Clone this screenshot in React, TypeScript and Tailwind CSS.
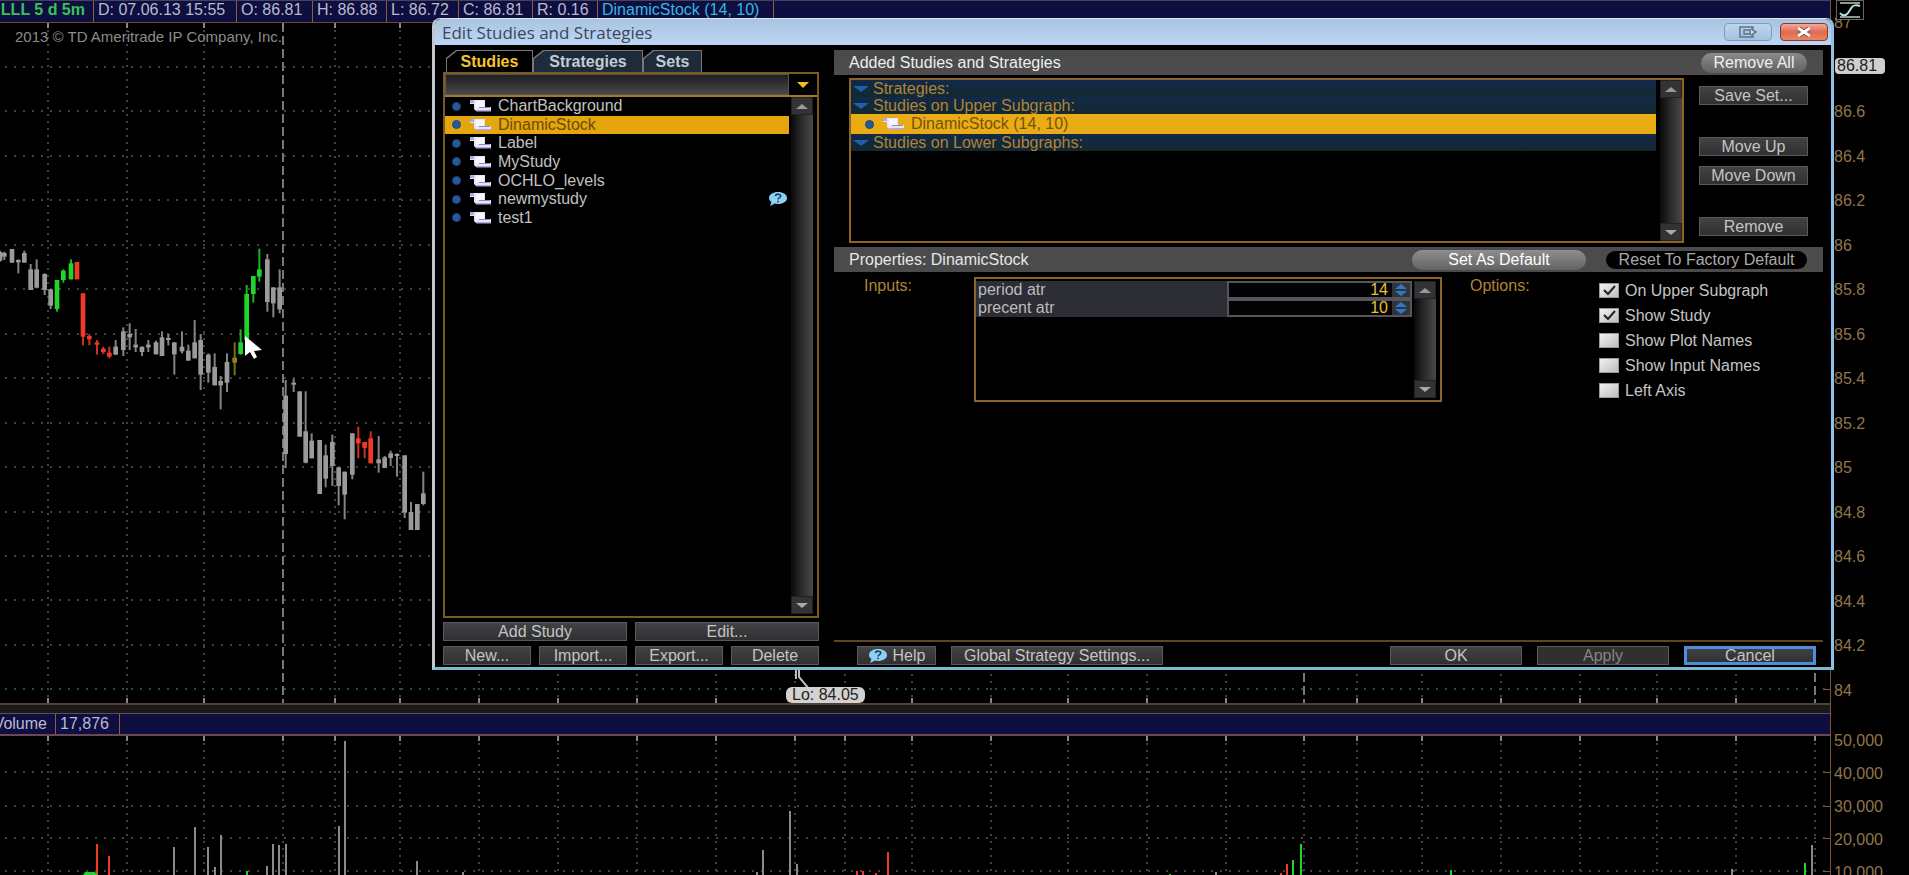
import { useState } from 'react';
import type { ReactNode } from 'react';

type Candle = [x: number, high: number, low: number, top: number, bottom: number, tone?: string];

const GREEN = '#1fd52c';
const RED = '#ee3a26';
const OLIVE = '#8b8420';
const GREY = '#9a9a9a';

// candles are kept at 3 units per pixel
const candles: Candle[] = [
  [0, 62, 95, 66, 92], [13, 65, 90, 69, 80], [36, 57, 98, 57, 98], [55, 88, 130, 90, 97], [73, 62, 98, 69, 98],
  [92, 102, 180, 118, 180], [110, 88, 175, 118, 173], [134, 130, 195, 132, 180], [152, 178, 237, 178, 227],
  [171, 150, 245, 150, 237, GREEN], [190, 118, 158, 122, 150, GREEN], [213, 88, 148, 100, 148, GREEN],
  [231, 96, 148, 96, 148, RED], [249, 190, 346, 190, 320, RED], [268, 312, 346, 318, 328, RED],
  [291, 330, 374, 337, 344, RED], [310, 350, 372, 356, 366, RED], [328, 350, 385, 368, 380, RED],
  [347, 330, 374, 350, 374], [370, 292, 378, 304, 360], [389, 280, 360, 312, 322], [407, 297, 366, 344, 352],
  [426, 350, 378, 350, 366], [445, 330, 366, 344, 352], [468, 332, 373, 337, 373], [486, 304, 378, 322, 378],
  [505, 312, 346, 324, 330], [523, 337, 434, 337, 373], [546, 304, 370, 350, 364], [565, 344, 392, 362, 392],
  [584, 270, 385, 337, 385], [602, 312, 480, 330, 434], [625, 370, 458, 374, 428], [644, 370, 466, 411, 466],
  [662, 438, 538, 453, 466], [681, 370, 486, 396, 458], [704, 337, 436, 383, 398, OLIVE],
  [722, 298, 374, 337, 372, GREEN], [740, 165, 345, 192, 330, GREEN], [760, 138, 218, 138, 192, GREEN],
  [778, 56, 155, 118, 140, GREEN], [802, 72, 245, 88, 216], [820, 172, 262, 172, 220], [839, 118, 250, 172, 238],
  [857, 450, 714, 497, 672], [881, 446, 486, 458, 464], [899, 484, 620, 484, 620], [917, 484, 700, 604, 698],
  [935, 610, 685, 632, 685], [959, 630, 792, 630, 792], [977, 644, 772, 676, 746], [997, 614, 768, 636, 708],
  [1016, 712, 826, 712, 768], [1034, 725, 868, 725, 794], [1057, 610, 748, 610, 734],
  [1075, 590, 685, 625, 640, RED], [1094, 636, 685, 636, 654, RED], [1112, 604, 700, 625, 700, RED],
  [1136, 618, 728, 688, 700], [1154, 678, 714, 682, 714], [1172, 662, 708, 670, 684], [1191, 670, 740, 672, 678],
  [1214, 676, 864, 676, 848], [1233, 816, 900, 846, 900], [1252, 822, 900, 822, 900], [1270, 725, 826, 790, 822],
];

const volumes: [x: number, top: number, tone?: string][] = [
  [97, 108, RED], [109, 120, RED], [174, 111], [195, 91], [208, 111], [215, 131], [221, 99], [247, 135, GREEN],
  [267, 130], [273, 108], [279, 109], [286, 108], [339, 90], [345, 5], [417, 125], [463, 136], [757, 136],
  [763, 114], [790, 75], [797, 128], [857, 135, RED], [863, 135, RED], [876, 137, RED], [888, 116, RED],
  [1170, 138, GREEN], [1216, 136], [1281, 137, RED], [1287, 128, RED], [1293, 124, GREEN], [1301, 108, GREEN],
  [1451, 134, GREEN], [1732, 133], [1805, 127, GREEN], [1812, 109],
];

const sessions = [283, 1304, 1815];
const hours = [48, 127, 204, 335, 400, 479, 558, 637, 716, 795, 845, 912, 991, 1068, 1147, 1226, 1357, 1422, 1501, 1580, 1657, 1736];
const priceLines = [44, 88, 133, 177, 222, 266, 311, 355, 400, 444, 489, 533, 577, 622, 666];
const volumeLines = [36, 70, 102, 135];

const quotes = [
  { text: 'D: 07.06.13 15:55', cell: 'w-[143px]' },
  { text: 'O: 86.81', cell: 'w-[76px]' },
  { text: 'H: 86.88', cell: 'w-[74px]' },
  { text: 'L: 86.72', cell: 'w-[72px]' },
  { text: 'C: 86.81', cell: 'w-[74px]' },
  { text: 'R: 0.16', cell: 'w-[65px]' },
];

const prices = ['87', '86.81', '86.6', '86.4', '86.2', '86', '85.8', '85.6', '85.4', '85.2', '85', '84.8', '84.6', '84.4', '84.2', '84'];
const amounts = ['50,000', '40,000', '30,000', '20,000', '10,000'];
const studies = ['ChartBackground', 'DinamicStock', 'Label', 'MyStudy', 'OCHLO_levels', 'newmystudy', 'test1'];

const options = [
  { label: 'On Upper Subgraph', on: true },
  { label: 'Show Study', on: true },
  { label: 'Show Plot Names', on: false },
  { label: 'Show Input Names', on: false },
  { label: 'Left Axis', on: false },
];

function Grid({ rows, dashed }: { rows: number[]; dashed?: boolean }) {
  return (
    <g stroke="#424242" strokeWidth="2">
      {rows.map(y => (
        <g key={y}>
          <line x1="5" x2="100%" y1={y} y2={y} strokeDasharray="2 7" />
          <rect x="100%" y={y} width="7" height="1" transform="translate(-7 0)" fill="#7c5534" stroke="none" />
        </g>
      ))}
      {[...hours, ...sessions].map(x => (
        <g key={x}>
          {dashed && sessions.includes(x) ? (
            <line x1={x} x2={x} y1="0" y2="100%" stroke="#777" strokeDasharray="9 4" />
          ) : (
            <line x1={x} x2={x} y1="0" y2="100%" strokeDasharray="2 5" />
          )}
          <line x1={x} x2={x} y1="0" y2="5" stroke="#888" />
        </g>
      ))}
    </g>
  );
}

function PriceChart() {
  return (
    <svg className="block h-[680px] w-full" aria-label="Price chart">
      <Grid rows={priceLines} dashed />
      {hours.map(x => (
        <line key={x} x1={x} x2={x} y1="675" y2="680" stroke="#888" strokeWidth="2" />
      ))}
      <g transform="translate(0 207) scale(.33333)">
        {candles.map(([x, high, low, top, bottom, tone = GREY]) => (
          <g key={x} fill={tone}>
            <rect x={x - 3} y={high} width="6" height={low - high} opacity=".85" />
            <rect x={x - 7} y={top} width="14" height={bottom - top} />
          </g>
        ))}
      </g>
      <path d="M245 313v20l5-4 4 7 3-2-3-6 8-1z" fill="#fff" />
      <path d="M796 646v10M799 646v8l10 12" stroke="#bbb" strokeWidth="2" fill="none" />
    </svg>
  );
}

function VolumeChart() {
  return (
    <svg className="block min-h-0 w-full flex-1" aria-label="Volume chart">
      <Grid rows={volumeLines} />
      {volumes.map(([x, top, tone = '#8a8a8a']) => (
        <rect key={x} x={x - 1} y={top} width="2" height="400" fill={tone} />
      ))}
      <path d="M83 139l2-3h10l3 3z" fill={GREEN} />
    </svg>
  );
}

function Scroll() {
  return (
    <svg width="23" height="14" viewBox="0 0 23 14" aria-hidden="true">
      <path d="M1 1h15v7h6v4H7L5 10V5H1z" fill="#e6e6fb" />
      <path d="M1 1h4v3H1zM7 11h15v1.500H7z" fill="#b0a8e0" />
      <path d="M7 2h8v6H7z" fill="#f6f6ff" />
      <path d="M10 8.500h11" stroke="#8f8cc0" />
    </svg>
  );
}

function Bubble() {
  return (
    <svg width="19" height="14" viewBox="0 0 19 14" aria-hidden="true">
      <path d="M10 0c5 0 9 2.500 9 6s-4 6-9 6c-1 0-2 0-3-.4L2 14l1.500-4C2 9 1 7.700 1 6c0-3.500 4-6 9-6z" fill="#8ed0f4" />
      <path d="M7.500 4.200c.3-2.800 5.400-2.600 5.200 0-.1 1.500-2.600 1.400-2.600 3.200M10 8.800v1.500" stroke="#163a63" strokeWidth="1.600" fill="none" />
    </svg>
  );
}

function Dot() {
  return <span className="size-[9px] shrink-0 rounded-full border border-[#1b467e] bg-[#28599a]" />;
}

function Arrow({ up, className }: { up?: boolean; className: string }) {
  return (
    <svg viewBox="0 0 12 6" preserveAspectRatio="none" className={className} fill="currentColor" aria-hidden="true">
      <path d={up ? 'M0 6L6 0l6 6z' : 'M0 0h12L6 6z'} />
    </svg>
  );
}

function Scrollbar() {
  return (
    <div className="flex w-[22px] shrink-0 flex-col">
      <button aria-label="Scroll up" className="grid h-[18px] place-items-center border border-[#222] bg-[#333335] text-[#999]">
        <Arrow up className="h-[5px] w-3" />
      </button>
      <div className="flex-1 bg-linear-to-r from-[#0a0a0a] via-[#2c2c2c] to-[#484848]" />
      <button aria-label="Scroll down" className="grid h-[18px] place-items-center border border-[#222] bg-[#333335] text-[#aaa]">
        <Arrow className="h-[5px] w-3" />
      </button>
    </div>
  );
}

function Btn({ children, className = '', disabled }: { children: ReactNode; className?: string; disabled?: boolean }) {
  return (
    <button
      disabled={disabled}
      className={`flex h-[19px] items-center justify-center border border-[#5a5a5a] bg-linear-to-b from-[#424244] to-[#303032] leading-none text-[#c4c4c4] disabled:bg-none disabled:bg-[#30302e] disabled:text-[#858585] ${className}`}
    >
      {children}
    </button>
  );
}

function Tab({ label, active, className }: { label: string; active?: boolean; className: string }) {
  return (
    <button
      role="tab"
      aria-selected={!!active}
      className={`bg-[#777] p-px pb-0 font-bold [clip-path:polygon(10px_0,100%_0,100%_100%,0_100%,0_8px)] ${className}`}
    >
      <span
        className={`flex h-[21px] items-center justify-center [clip-path:polygon(10px_0,100%_0,100%_100%,0_100%,0_8px)] ${
          active ? 'bg-black text-[#f4c52c]' : 'bg-[#1d2b3a] text-[#c3ccd3]'
        }`}
      >
        {label}
      </span>
    </button>
  );
}

function StudyBrowser() {
  const [selected, setSelected] = useState('DinamicStock');
  return (
    <div className="flex w-[376px] shrink-0 flex-col">
      <div role="tablist" className="flex pl-[3px]">
        <Tab label="Studies" active className="w-[87px]" />
        <Tab label="Strategies" className="w-[110px]" />
        <Tab label="Sets" className="w-[59px]" />
      </div>
      <div className="flex flex-1 flex-col border-2 border-[#7d5a20]">
        <div className="flex h-[23px] border-b-2 border-[#a87a26]">
          <input aria-label="Search studies" className="min-w-0 flex-1 border border-[#555] bg-linear-to-b from-[#1e1e20] to-[#4a4a4c] px-2 text-white outline-none" />
          <button aria-label="Show filters" className="grid w-7 place-items-center text-[#f5bd24]">
            <Arrow className="h-1.5 w-3" />
          </button>
        </div>
        <div className="flex flex-1 pr-1 pb-0.5">
          <ul className="mr-0.5 grid h-[130px] flex-1 grid-rows-7">
            {studies.map(name => (
              <li key={name} className="grid">
                <button
                  onClick={() => setSelected(name)}
                  className={`flex items-center pr-0.5 pl-[7px] leading-none ${selected === name ? 'bg-[#e5a50d] text-[#6b4c0a]' : 'text-[#c0c0c0]'}`}
                >
                  <Dot />
                  <span className="mr-1.5 ml-2">
                    <Scroll />
                  </span>
                  {name}
                  {name === 'newmystudy' && (
                    <span className="ml-auto">
                      <Bubble />
                    </span>
                  )}
                </button>
              </li>
            ))}
          </ul>
          <Scrollbar />
        </div>
      </div>
      <div className="mt-1 grid grid-cols-2 gap-x-2">
        <Btn>Add Study</Btn>
        <Btn>Edit...</Btn>
      </div>
      <div className="mt-[5px] grid grid-cols-4 gap-x-2">
        <Btn>New...</Btn>
        <Btn>Import...</Btn>
        <Btn>Export...</Btn>
        <Btn>Delete</Btn>
      </div>
    </div>
  );
}

function Group({ label }: { label: string }) {
  return (
    <div className="flex h-[17px] items-center gap-1 bg-linear-to-b from-[#12294a] to-[#14282f] pl-0.5 leading-none text-[#b08433]">
      <Arrow className="h-1.5 w-4 text-[#1f5ea8]" />
      {label}
    </div>
  );
}

function AddedStudies() {
  return (
    <section>
      <header className="flex h-[25px] items-center justify-between bg-linear-to-b from-[#474b49] to-[#504c4d] pr-4 pl-[15px] text-[#eee]">
        <h2>Added Studies and Strategies</h2>
        <button className="h-5 w-[106px] rounded-full bg-linear-to-b from-[#8c8a8b] to-[#615f60] leading-none">Remove All</button>
      </header>
      <div className="mt-[3px] flex h-[165px] gap-[15px] pr-[15px] pl-[15px]">
        <div className="flex flex-1 border-2 border-[#8a6526]">
          <div className="mr-1 flex-1">
            <Group label="Strategies:" />
            <Group label="Studies on Upper Subgraph:" />
            <div className="flex h-5 items-center bg-[#eaac14] pl-[14px] leading-none text-[#74520d]">
              <Dot />
              <span className="mr-1.5 ml-2">
                <Scroll />
              </span>
              DinamicStock (14, 10)
            </div>
            <Group label="Studies on Lower Subgraphs:" />
          </div>
          <Scrollbar />
        </div>
        <div className="flex w-[109px] flex-col pt-2">
          <Btn>Save Set...</Btn>
          <Btn className="mt-8">Move Up</Btn>
          <Btn className="mt-2.5">Move Down</Btn>
          <Btn className="mt-8">Remove</Btn>
        </div>
      </div>
    </section>
  );
}

function NumberRow({ id, label, value }: { id: string; label: string; value: number }) {
  const [current, setCurrent] = useState(value);
  return (
    <div className="flex h-[18px] bg-[#2c2d35] leading-none">
      <label htmlFor={id} className="flex w-[251px] shrink-0 items-center pl-0.5 text-[#bcbcbc]">
        {label}
      </label>
      <div className="flex min-w-0 flex-1 border-2 border-[#55565a]">
        <input
          id={id}
          inputMode="numeric"
          value={current}
          onChange={e => setCurrent(Number(e.target.value) || 0)}
          className="min-w-0 flex-1 bg-[#030305] pr-1 text-right text-[#e3bf3c] outline-none"
        />
        <div className="flex w-[18px] shrink-0 flex-col items-center justify-between bg-[#30343b] py-px text-[#3377c9]">
          <button aria-label={`Increase ${label}`} onClick={() => setCurrent(current + 1)}>
            <Arrow up className="block h-[5px] w-3" />
          </button>
          <button aria-label={`Decrease ${label}`} onClick={() => setCurrent(current - 1)}>
            <Arrow className="block h-[5px] w-3" />
          </button>
        </div>
      </div>
    </div>
  );
}

function Properties() {
  return (
    <section className="mt-1 flex-1">
      <header className="flex h-[25px] items-center bg-[#4b4b4b] pr-4 pl-[15px] text-[#e6e6e6]">
        <h2 className="flex-1">Properties: DinamicStock</h2>
        <button className="h-5 w-[174px] rounded-full bg-linear-to-b from-[#8e8e8e] to-[#636363] leading-none text-white">Set As Default</button>
        <button className="ml-5 h-[18px] w-[201px] rounded-full bg-black leading-none text-[#aaa]">Reset To Factory Default</button>
      </header>
      <div className="flex pt-1 pl-[30px]">
        <h3 className="w-[110px] text-[#b08433]">Inputs:</h3>
        <div className="mt-px flex h-[125px] w-[468px] border-2 border-[#8a6526] pt-0.5 pr-1 pb-0.5">
          <div className="mr-0.5 min-w-0 flex-1">
            <NumberRow id="period" label="period atr" value={14} />
            <NumberRow id="percent" label="precent atr" value={10} />
          </div>
          <Scrollbar />
        </div>
        <h3 className="ml-7 w-[129px] text-[#b08433]">Options:</h3>
        <div className="pt-0.5">
          {options.map(({ label, on }) => (
            <label key={label} className="flex h-[25px] items-center gap-1.5 text-[#c4c4c4]">
              <span className="grid">
                <input
                  type="checkbox"
                  defaultChecked={on}
                  className="peer col-start-1 row-start-1 h-[15px] w-5 appearance-none border border-[#999] bg-linear-to-br from-[#f2f2f2] to-[#bdbdbd]"
                />
                <svg viewBox="0 0 20 15" className="pointer-events-none invisible col-start-1 row-start-1 h-[15px] w-5 peer-checked:visible">
                  <path d="M5 7l4 4 7-8" stroke="#222" strokeWidth="2" fill="none" />
                </svg>
              </span>
              {label}
            </label>
          ))}
        </div>
      </div>
    </section>
  );
}

function StudiesDialog() {
  return (
    <div
      role="dialog"
      aria-labelledby="dialog-title"
      className="absolute top-[18px] right-[75px] left-[432px] flex h-[652px] flex-col rounded-t-lg border-3 border-t border-t-[#d8e6f4] border-r-[#8fc0e6] border-b-[#7db9cf] border-l-[#c4c4cc] bg-black"
    >
      <div className="flex h-[26px] items-center rounded-t-md bg-linear-to-b from-[#a9c4e0] to-[#bcd5f6] pr-[3px] pl-[7px]">
        <h1 id="dialog-title" className="flex-1 font-['Open_Sans',sans-serif] text-[17px] leading-none text-[#3b4759]">
          Edit Studies and Strategies
        </h1>
        <button aria-label="Detach" className="grid h-[18px] w-12 place-items-center rounded-sm border border-[#7f9dbb] bg-linear-to-b from-[#bdd6ee] to-[#a3c1de]">
          <svg width="18" height="12" viewBox="0 0 18 12" fill="none" stroke="#5f7288" strokeWidth="1.500">
            <path d="M14 3V1H1v10h13V9M5 4h6v4H5z" />
            <path d="M12 3l5 3-5 3" fill="#dfe9f3" />
          </svg>
        </button>
        <button aria-label="Close" className="ml-2 grid h-[18px] w-12 place-items-center rounded-sm border border-[#8d3a34] bg-linear-to-b from-[#f0a99a] via-[#e06a50] to-[#e88563]">
          <svg width="16" height="10" viewBox="0 0 16 10">
            <path d="M2 1l12 8M14 1L2 9" stroke="#7b3a3a" strokeWidth="4.500" />
            <path d="M2 1l12 8M14 1L2 9" stroke="#fff" strokeWidth="3" />
          </svg>
        </button>
      </div>
      <div className="flex flex-1 gap-[15px] pt-[5px] pr-2 pb-0.5 pl-2">
        <StudyBrowser />
        <div className="flex flex-1 flex-col">
          <AddedStudies />
          <Properties />
          <footer className="flex gap-[15px] border-t-2 border-[#5f4620] pt-1 pr-[7px] pl-[23px]">
            <Btn className="w-[79px] gap-1.5">
              <Bubble />
              Help
            </Btn>
            <Btn className="mr-auto w-[212px]">Global Strategy Settings...</Btn>
            <Btn className="w-[132px]">OK</Btn>
            <Btn className="w-[132px]" disabled>
              Apply
            </Btn>
            <Btn className="w-[132px] outline-3 -outline-offset-3 outline-[#4d8ddb]">Cancel</Btn>
          </footer>
        </div>
      </div>
    </div>
  );
}

function PriceAxis() {
  return (
    <aside className="w-[78px] shrink-0 text-[#93744b]">
      <div className="flex h-[701px] flex-col items-start justify-between pt-[13px]">
        {prices.map(price =>
          price === '86.81' ? (
            <span key={price} className="mb-1 ml-1 rounded-sm bg-[#cfcfcf] pr-2 pl-0.5 leading-4 text-[#222]">
              {price}
            </span>
          ) : (
            <span key={price} className="pl-[3px] leading-5">
              {price}
            </span>
          ),
        )}
      </div>
      <div className="mt-[30px] flex h-[152px] flex-col justify-between">
        {amounts.map(amount => (
          <span key={amount} className="pl-[3px] leading-5">
            {amount}
          </span>
        ))}
      </div>
    </aside>
  );
}

export default function App() {
  return (
    <div className="relative flex h-screen overflow-hidden bg-black font-['Liberation_Sans',Arial,sans-serif] text-base leading-5 text-[#b9b9cf]">
      <main className="flex min-w-0 flex-1 flex-col border-r border-[#7c5534]">
        <div className="flex h-[23px] shrink-0 border-t border-b border-t-[#45455a] border-b-[#6b4a37] bg-[#0f0e40] leading-[18px]">
          <div className="flex w-[94px] justify-end overflow-hidden border-r border-[#8a5f3a] pr-2 font-bold whitespace-nowrap text-[#35c357]">LLL 5 d 5m</div>
          {quotes.map(({ text, cell }) => (
            <div key={text} className={`border-r border-[#8a5f3a] pl-1 whitespace-nowrap ${cell}`}>
              {text}
            </div>
          ))}
          <div className="w-[176px] border-r border-[#8a5f3a] pl-1 text-[#35b8e0]">DinamicStock (14, 10)</div>
        </div>
        <div className="relative shrink-0">
          <PriceChart />
          <p className="absolute top-1 left-0 w-[282px] text-right text-[15px] whitespace-nowrap text-[#8c8c8c]">2013 © TD Ameritrade IP Company, Inc.</p>
          <span className="absolute top-[664px] left-[786px] rounded-md bg-[#d2d2d2] px-1.5 leading-4 text-[#222]">Lo: 84.05</span>
        </div>
        <div className="h-2.5 shrink-0 border-t-2 border-[#57402f] bg-[#1a1a1a]" />
        <div className="flex h-[23px] shrink-0 border-t border-b-2 border-t-[#6a4a50] border-b-[#6a4a50] bg-[#0f0e40]">
          <div className="flex w-14 justify-end overflow-hidden border-r border-[#8a5f3a] pr-2">Volume</div>
          <div className="w-16 border-r border-[#8a5f3a] pl-1">17,876</div>
        </div>
        <VolumeChart />
      </main>
      <PriceAxis />
      <StudiesDialog />
      <button aria-label="Chart scale" className="absolute top-0 right-[45px] grid h-5 w-7 place-items-center border border-[#666] bg-black">
        <svg width="22" height="16" viewBox="0 0 22 16" fill="none" stroke="#b9e3e3" strokeWidth="2">
          <path d="M1 1h20M1 15h20" stroke="#8a9a8c" />
          <path d="M1 11c2 3 6 3 8 0l4-6c1-2 5-2 8-1" />
        </svg>
      </button>
    </div>
  );
}
